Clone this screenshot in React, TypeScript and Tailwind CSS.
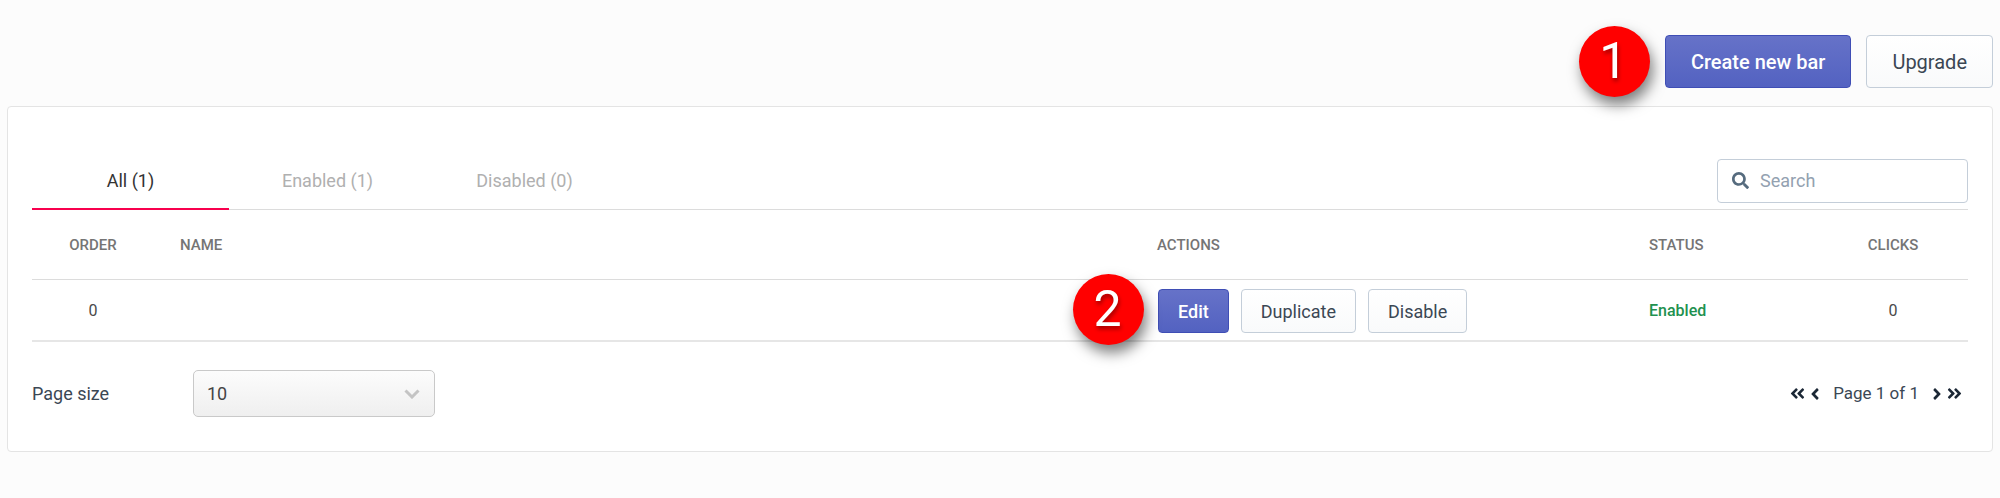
import { useState } from 'react'
import { FaAngleDoubleLeft, FaAngleDoubleRight, FaAngleLeft, FaAngleRight, FaSearch } from 'react-icons/fa'

interface Bar {
  order: number
  name: string
  status: string
  clicks: number
}

const bars: Bar[] = [{ order: 0, name: '', status: 'Enabled', clicks: 0 }]

const tabs = ['All (1)', 'Enabled (1)', 'Disabled (0)']

const primary = 'border-[#3f4eb5] bg-linear-to-b from-[#6672c8] to-[#5362c1] font-medium text-white'
const secondary = 'border-[#c4ced9] bg-linear-to-b from-white to-[#f9fafb] text-[#3b4754]'

function StepBadge({ step, className = '' }: { step: number, className?: string }) {
  return (
    <span
      className={`flex size-[71px] items-center justify-center rounded-full bg-[#ff0000] pr-0.5 pb-0.5 text-[50px] leading-none text-white shadow-[3px_8px_14px_rgba(0,0,0,0.5)] text-shadow-[1px_3px_4px_rgba(0,0,0,0.4)] ${className}`}
    >
      {step}
    </span>
  )
}

function Pager() {
  const link = 'flex h-6 items-center text-[#1c2836]'
  return (
    <nav aria-label="Pagination" className="flex items-center pr-[5px] text-[17px]">
      <button type="button" aria-label="First page" className={link}><FaAngleDoubleLeft size={17} /></button>
      <button type="button" aria-label="Previous page" className={link}><FaAngleLeft size={18} /></button>
      <span className="px-[9px]">Page 1 of 1</span>
      <button type="button" aria-label="Next page" className={link}><FaAngleRight size={18} /></button>
      <button type="button" aria-label="Last page" className={link}><FaAngleDoubleRight size={17} /></button>
    </nav>
  )
}

export default function App() {
  const [active, setActive] = useState(0)

  return (
    <div className="min-h-screen bg-[#fcfcfc] px-[7px] pb-8 font-[Roboto,sans-serif]">
      {/* Header */}
      <header className="flex items-center justify-end gap-[15px] pt-[26px] pb-[9px]">
        <StepBadge step={1} />
        <button type="button" className={`h-[53px] rounded-sm border px-[25px] text-[20px] ${primary}`}>Create new bar</button>
        <button type="button" className={`h-[53px] rounded-sm border px-[25px] text-[20px] ${secondary}`}>Upgrade</button>
      </header>

      <main className="rounded-sm border border-[#e4e4e4] bg-white px-6 pt-[45px] pb-[34px]">
        {/* Tabs and search */}
        <div className="flex items-center justify-between border-b border-[#dcdcdc]">
          <div role="tablist" className="-mb-px flex">
            {tabs.map((tab, i) => (
              <button
                key={tab}
                type="button"
                role="tab"
                aria-selected={i === active}
                onClick={() => setActive(i)}
                className={`h-[58px] w-[197px] border-b-2 text-[18px] ${
                  i === active ? 'border-b-[#f8004e] text-[#333333]' : 'border-b-transparent text-[#b0b0b0]'
                }`}
              >
                {tab}
              </button>
            ))}
          </div>
          <label className="flex h-11 w-[251px] items-center gap-[11px] rounded-sm border border-[#c4ced9] bg-white px-[14px]">
            <FaSearch size={17} className="shrink-0 text-[#566b7e]" />
            <input
              type="search"
              aria-label="Search"
              placeholder="Search"
              className="min-w-0 flex-1 text-[18px] outline-none placeholder:text-[#93a1b0]"
            />
          </label>
        </div>

        {/* Bars */}
        <table className="w-full table-fixed border-separate border-spacing-0 text-left">
          <thead>
            <tr className="text-[15px] text-[#757575] *:h-[70px] *:border-b *:border-[#dcdcdc] *:pt-0.5 *:font-medium">
              <th className="w-[122px] text-center">ORDER</th>
              <th className="pl-[26px]">NAME</th>
              <th className="w-[492px] pl-[26px]">ACTIONS</th>
              <th className="w-[195px] pl-[26px]">STATUS</th>
              <th className="w-[150px] text-center">CLICKS</th>
            </tr>
          </thead>
          <tbody>
            {bars.map((bar) => (
              <tr key={bar.order} className="text-[16px] text-[#4a4a4a] *:h-[62px] *:border-b-2 *:border-[#e6e6e6] *:pt-0.5">
                <td className="text-center">{bar.order}</td>
                <td className="pl-[26px]">{bar.name}</td>
                <td className="pl-[27px]">
                  <div className="relative flex gap-3 text-[18px]">
                    <StepBadge step={2} className="absolute -top-[15px] -left-[85px]" />
                    <button type="button" className={`h-11 rounded-sm border px-[19px] ${primary}`}>Edit</button>
                    <button type="button" className={`h-11 rounded-sm border px-[19px] ${secondary}`}>Duplicate</button>
                    <button type="button" className={`h-11 rounded-sm border px-[19px] ${secondary}`}>Disable</button>
                  </div>
                </td>
                <td className="pl-[26px] font-medium text-[#21914f]">{bar.status}</td>
                <td className="text-center">{bar.clicks}</td>
              </tr>
            ))}
          </tbody>
        </table>

        {/* Footer */}
        <div className="mt-7 flex items-center justify-between text-[18px] text-[#3b4754]">
          <div className="flex items-center">
            <label htmlFor="page-size" className="w-[161px]">Page size</label>
            <div className="relative">
              <select
                id="page-size"
                defaultValue="10"
                className="h-[47px] w-[242px] appearance-none rounded-[5px] border border-[#c9c9c9] bg-linear-to-b from-[#fcfcfc] to-[#efefef] px-[13px] text-[18px] text-[#444444]"
              >
                <option>10</option>
                <option>25</option>
                <option>50</option>
              </select>
              <svg
                viewBox="0 0 16 10"
                className="pointer-events-none absolute top-1/2 right-[15px] h-[10px] w-4 -translate-y-1/2 fill-none stroke-[#c4c4c4] stroke-[3]"
              >
                <path d="M1.5 1.5 8 8l6.500-6.500" />
              </svg>
            </div>
          </div>
          <Pager />
        </div>
      </main>
    </div>
  )
}
